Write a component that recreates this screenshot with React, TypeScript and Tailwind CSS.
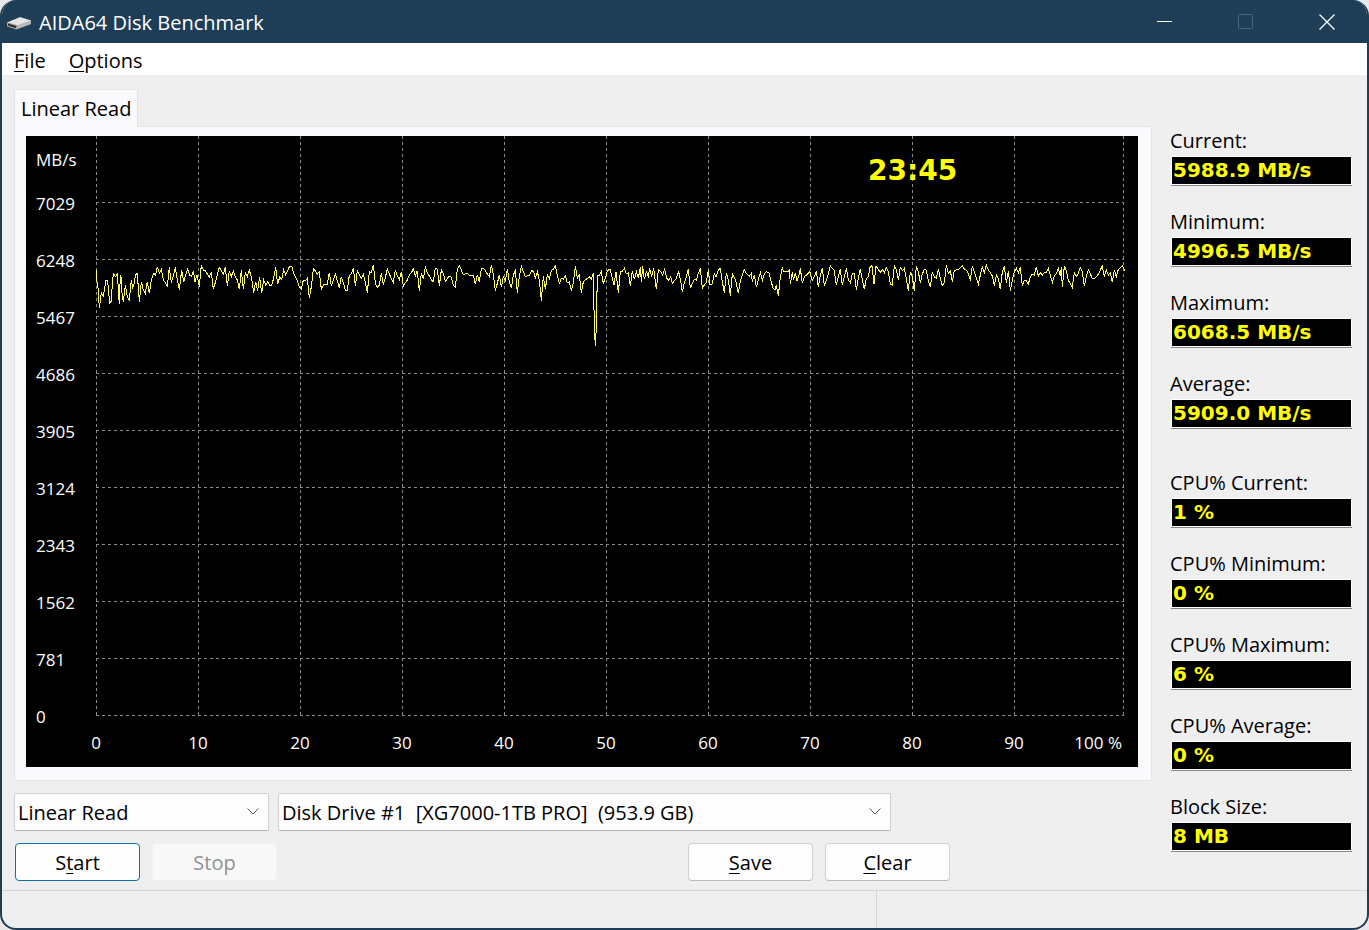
import type { ReactNode } from "react";

const speeds = [7029, 6248, 5467, 4686, 3905, 3124, 2343, 1562, 781, 0];
const percents = [0, 10, 20, 30, 40, 50, 60, 70, 80, 90];

// Read speed samples, three units to a chart pixel, in four runs from left to right
const runs = [
  {
    from: 60,
    points:
      "31,60 33,95 37,120 40,175 46,128 52,138 60,90 65,92 71,160 75,155 82,70 88,80 94,72 100,163 103,75 106,85 108,130 112,155 118,105 124,140 130,150 136,90 140,112 145,100 148,75 153,70 157,110 160,157 166,95 172,120 178,130 184,95 190,130 196,90 203,70 209,75 214,50 220,70 226,58 232,90 238,98 244,108 250,52 256,98 262,78 268,52 274,90 280,120 287,60 293,95 299,75 305,58 311,75 317,80 322,62 327,95 333,75 340,110 346,45 352,60 358,62 364,72 370,82 376,65 382,118 390,90 400,52 406,62 412,72 418,52 424,108 430,62 436,80 442,62 448,80 454,90 460,118 466,60 472,118 478,68 484,80 490,60 497,85 503,128 509,95 515,122 521,80 527,130 533,90 539,105 545,95 551,105 557,105 563,85 569,52 575,102 581,82 587,88 593,60 599,75 606,60 611,48 617,48 623,70 633,90 640,110 646,118 652,90 658,92 664,85 670,143 676,110 682,57 688,62 694,72 700,65 706,118 712,105 724,103 730,68 736,108 742,90 748,72 754,92 760,115 766,80 772,98 778,120 784,122 790,75 792,75",
  },
  {
    from: 324,
    points:
      "0,75 4,72 10,55 16,108 22,62 28,75 34,85 40,72 46,98 52,128 58,65 64,68 70,45 76,100 82,112 88,105 94,70 100,105 106,82 112,57 118,72 124,85 130,98 136,60 142,78 148,90 154,65 160,110 166,98 172,90 178,75 184,68 190,57 196,78 202,62 208,124 214,68 220,88 226,52 232,68 238,78 244,90 250,95 256,55 262,58 268,108 274,60 280,70 286,95 292,85 298,78 304,82 310,105 316,112 322,58 328,48 334,60 340,75 350,70 358,75 370,75 376,103 382,75 388,95 394,57 400,55 406,62 412,72 418,80 424,45 430,72 436,122 442,100 448,75 454,112 460,80 466,92 472,57 478,95 484,115 490,75 496,62 502,128 508,78 514,48 520,65 526,80 538,76 546,60 552,68 556,85 562,65 568,90 574,152 580,78 586,118 592,75 598,85 604,62 610,58 616,48 622,75 628,100 634,85 640,88 646,78 652,98 658,95 664,122 670,98 676,48 682,85 688,75 694,130 700,95 712,85 718,80 724,88 730,70 733,232 736,287 739,232 742,75 748,75 754,65 760,100 766,85 772,62 780,57",
  },
  {
    from: 584,
    points:
      "0,57 6,80 12,105 18,65 25,128 31,65 37,64 43,55 49,72 55,68 61,108 67,62 73,88 79,65 85,85 91,52 94,95 98,48 103,88 109,65 115,80 119,55 125,80 131,55 139,118 145,58 152,65 158,75 164,58 170,85 176,90 182,80 187,100 193,92 199,85 206,65 212,92 217,125 223,98 229,80 235,57 241,115 247,100 253,88 259,90 265,70 271,55 277,115 283,105 289,98 295,60 300,105 306,103 313,72 318,80 325,60 331,55 337,95 343,128 349,68 355,90 361,137 367,72 373,82 379,100 385,130 391,92 397,75 403,58 409,70 418,78 424,70 427,95 433,75 439,112 445,88 451,68 457,92 463,72 469,65 477,68 483,92 489,115 495,120 499,105 505,137 511,82 517,52 520,65 534,64 538,60 541,102 547,65 550,90 556,68 561,92 567,75 571,55 577,100 583,80 590,75 600,65 607,92 613,80 619,62 625,112 631,75 637,55 643,108 649,90 655,72 661,48 667,55 673,62 679,105 685,80 691,58 697,105 703,80 709,55 715,90 721,98 727,72 733,70 739,120 745,85 751,57 757,90 763,118 769,85 775,80 780,52",
  },
  {
    from: 844,
    points:
      "0,52 6,47 12,103 18,48 25,58 31,68 37,58 43,68 49,52 55,65 61,103 67,105 73,48 79,58 85,90 91,52 97,62 103,55 109,85 115,122 121,65 127,80 133,122 139,48 145,65 151,98 157,72 163,58 169,60 175,92 181,112 187,65 193,82 199,85 205,58 211,85 217,107 223,98 229,45 235,70 241,62 247,95 253,60 259,60 267,57 277,48 283,57 289,60 295,72 301,88 307,48 313,65 319,85 325,103 331,75 337,50 343,68 349,45 355,60 361,68 367,78 373,107 379,75 385,85 391,118 397,65 403,48 409,98 415,62 421,122 427,90 433,65 439,55 445,68 451,52 457,108 463,90 469,92 475,102 481,80 487,72 493,75 499,50 505,78 511,68 517,75 523,68 529,68 535,55 541,75 547,98 553,78 559,70 565,55 571,78 574,52 577,112 583,48 589,62 595,92 601,100 607,112 613,68 619,80 625,70 631,52 637,65 643,108 649,80 655,60 661,72 667,85 673,85 679,80 685,72 691,60 697,48 703,80 709,60 715,75 721,68 727,97 733,60 739,80 745,58 757,48 765,62",
  },
];

const readings = [
  { id: "current", label: "Current:", value: "5988.9 MB/s" },
  { id: "minimum", label: "Minimum:", value: "4996.5 MB/s" },
  { id: "maximum", label: "Maximum:", value: "6068.5 MB/s" },
  { id: "average", label: "Average:", value: "5909.0 MB/s" },
];

const cpuReadings = [
  { id: "cpu-current", label: "CPU% Current:", value: "1 %" },
  { id: "cpu-minimum", label: "CPU% Minimum:", value: "0 %" },
  { id: "cpu-maximum", label: "CPU% Maximum:", value: "6 %" },
  { id: "cpu-average", label: "CPU% Average:", value: "0 %" },
  { id: "block-size", label: "Block Size:", value: "8 MB" },
];

function Key({ children }: { children: ReactNode }) {
  return (
    <span className="underline decoration-1 underline-offset-3">
      {children}
    </span>
  );
}

function DriveIcon() {
  return (
    <svg className="h-5 w-6" viewBox="0 0 24 20" aria-hidden="true">
      <path d="M0 10.500 13 5l11 3.500v3.500L9 17.500 0 14z" fill="#8f8f8f" />
      <path d="M0 10.500 13 5.200l11 3.300-13 5z" fill="#e3e3e3" />
      <path d="M10 13.500 24 8.500v3.500L9 17.500z" fill="#b9b9bb" />
      <path d="M0 10.500l11 3-1.500 4L0 14.200z" fill="#a8a5a2" />
      <path d="M1 11.500l8.500 2.400-.8 2.300L1 13.600z" fill="#37302c" />
    </svg>
  );
}

function Reading({ id, label, value }: { id: string; label: string; value: string }) {
  return (
    <div>
      <label htmlFor={id} className="block h-[29px] text-xl leading-7">
        {label}
      </label>
      <output
        id={id}
        className="ml-px block h-[29px] border border-white bg-black pl-px font-['DejaVu_Sans',sans-serif] text-xl leading-[27px] font-bold text-[#ffff00] shadow-[0_1px_0_#86858a]"
      >
        {value}
      </output>
    </div>
  );
}

function Select({ id, label, value, width }: { id: string; label: string; value: string; width: string }) {
  return (
    <div className={`relative ${width}`}>
      <label htmlFor={id} className="sr-only">
        {label}
      </label>
      <select
        id={id}
        className="h-[38px] w-full appearance-none rounded-xs border border-[#cfcfcf] border-b-[#b5b5b5] bg-[#fdfdfd] pt-0.5 pr-8 pl-[3px] text-xl leading-8"
      >
        <option>{value}</option>
      </select>
      <svg
        className="pointer-events-none absolute top-[15px] right-[10px] h-2 w-3"
        viewBox="0 0 12 8"
        fill="none"
        stroke="#5c5c5c"
        aria-hidden="true"
      >
        <path d="M.5.500 6 6 11.500.500" />
      </svg>
    </div>
  );
}

function Chart() {
  return (
    <svg
      className="block h-auto w-full bg-black font-['Open_Sans',sans-serif]"
      viewBox="0 0 1112 631"
      role="img"
      aria-label="Linear Read"
    >
      <g stroke="#8c8c8c" strokeDasharray="3 3" shapeRendering="crispEdges">
        {speeds.map((s, i) => (
          <line key={s} x1="70" x2="1098" y1={66.5 + i * 57} y2={66.5 + i * 57} />
        ))}
        {percents.map((p, i) => (
          <line key={p} x1={70.5 + i * 102} x2={70.5 + i * 102} y1="0" y2="580" />
        ))}
        <line x1="1097.5" x2="1097.5" y1="0" y2="580" />
      </g>
      <g fill="none" stroke="#ffff55" strokeWidth="3" shapeRendering="crispEdges">
        {runs.map((r) => (
          <polyline
            key={r.from}
            transform={`translate(${r.from} 114) scale(${1 / 3})`}
            points={r.points}
          />
        ))}
      </g>
      <g fill="#fff" fontSize="17">
        <text x="10" y="30">
          MB/s
        </text>
        {speeds.map((s, i) => (
          <text key={s} x="10" y={74 + i * 57}>
            {s}
          </text>
        ))}
        {percents.map((p, i) => (
          <text key={p} x={70 + i * 102} y="613" textAnchor="middle">
            {p}
          </text>
        ))}
        <text x="1096" y="613" textAnchor="end">
          100 %
        </text>
      </g>
      <text
        className="font-['DejaVu_Sans',sans-serif]"
        x="842"
        y="44"
        fill="#ffff00"
        fontSize="28"
        fontWeight="700"
      >
        23:45
      </text>
    </svg>
  );
}

function App() {
  return (
    <div className="min-h-screen bg-[#e8e6e8] font-['Open_Sans',sans-serif] text-xl text-black">
      <div className="flex min-h-screen flex-col overflow-hidden rounded-2xl border-2 border-t-0 border-[#1d3e56] bg-[#f0eff0]">
        <header className="flex h-[43px] items-center bg-[#1d3e56] pl-[5px] text-white">
          <DriveIcon />
          <h1 className="ml-2 flex-1 pt-0.5">AIDA64 Disk Benchmark</h1>
          <button aria-label="Minimize" className="flex h-full w-[81px] items-center justify-center">
            <svg className="size-4" viewBox="0 0 16 16" stroke="currentColor">
              <path d="M0 7.500h15" />
            </svg>
          </button>
          <button
            aria-label="Maximize"
            disabled
            className="flex h-full w-[81px] items-center justify-center text-[#486579]"
          >
            <svg className="size-4" viewBox="0 0 16 16" fill="none" stroke="currentColor">
              <rect x=".5" y=".5" width="14" height="14" rx="1" />
            </svg>
          </button>
          <button aria-label="Close" className="flex h-full w-[81px] items-center justify-center">
            <svg className="size-4" viewBox="0 0 16 16" stroke="currentColor" strokeWidth="1.3">
              <path d="M.5.500l15 15M15.500.500l-15 15" />
            </svg>
          </button>
        </header>

        <nav className="flex h-8 items-center gap-[23px] bg-white pt-[3px] pl-3">
          <button>
            <Key>F</Key>ile
          </button>
          <button>
            <Key>O</Key>ptions
          </button>
        </nav>

        <main className="flex gap-[18px] pt-[14px] pr-[15px] pb-[9px] pl-3">
          <section className="min-w-0 flex-1">
            <button className="relative -mb-px block h-[38px] border border-b-0 border-[#e5e4e6] bg-[#faf9fb] px-[6px]">
              Linear Read
            </button>
            <div className="border border-[#e5e4e6] bg-[#faf9fb] px-[11px] pt-[9px] pr-[13px] pb-[13px]">
              <Chart />
            </div>
            <div className="mt-3 flex gap-[9px]">
              <Select id="test" label="Test" value="Linear Read" width="w-[255px]" />
              <Select
                id="drive"
                label="Drive"
                value={"Disk Drive #1\u00a0 [XG7000-1TB PRO]\u00a0 (953.9 GB)"}
                width="w-[613px]"
              />
            </div>
            <div className="mt-3 flex w-[936px] max-w-full gap-3 pl-px">
              <button className="h-[38px] w-[125px] rounded-sm border border-[#0f6fae] bg-[#fdfdfd] pt-0.5">
                S<Key>t</Key>art
              </button>
              <button
                disabled
                className="h-[38px] w-[125px] rounded-sm border border-[#f3f2f4] bg-[#f8f8f9] pt-0.5 text-[#919191]"
              >
                Stop
              </button>
              <button className="ml-auto h-[38px] w-[125px] rounded-sm border border-[#d0d0d0] border-b-[#bbbbbb] bg-[#fdfdfd] pt-0.5">
                <Key>S</Key>ave
              </button>
              <button className="h-[38px] w-[125px] rounded-sm border border-[#d0d0d0] border-b-[#bbbbbb] bg-[#fdfdfd] pt-0.5">
                <Key>C</Key>lear
              </button>
            </div>
          </section>

          <aside className="flex w-[182px] flex-col gap-[41px] pt-[38px]">
            <div className="flex flex-col gap-[23px]">
              {readings.map((r) => (
                <Reading key={r.id} {...r} />
              ))}
            </div>
            <div className="flex flex-col gap-[23px]">
              {cpuReadings.map((r) => (
                <Reading key={r.id} {...r} />
              ))}
            </div>
          </aside>
        </main>

        <footer className="flex flex-1 border-t border-[#d5d4d6]">
          <div className="w-[875px] border-r border-[#d5d4d6]" />
          <div className="flex-1" />
        </footer>
      </div>
    </div>
  );
}

export default App;
